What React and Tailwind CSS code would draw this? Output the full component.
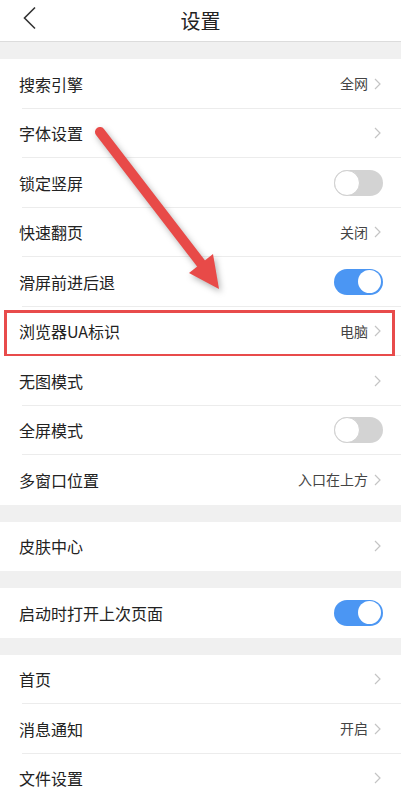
import React from "react";

const FONT = { fontFamily: '"Noto Sans CJK SC", "Noto Sans", sans-serif' };

function Chevron() {
  return (
    <svg width="7" height="12" viewBox="0 0 7 12" className="shrink-0">
      <path d="M1 1 L6 6 L1 11" fill="none" stroke="#c4c4c4" strokeWidth="1.2" />
    </svg>
  );
}

function Toggle({ on }) {
  return on ? (
    <div className="w-[49px] h-[26px] mr-[-2px] rounded-full bg-[#4b96f3] flex items-center justify-end pr-[2px]">
      <div className="w-[23px] h-[23px] rounded-full bg-white" />
    </div>
  ) : (
    <div className="w-[49px] h-[26px] mr-[-2px] rounded-full bg-[#d3d3d3] flex items-center">
      <div className="w-[26px] h-[26px] rounded-full bg-white border border-[#d0d0d0]" />
    </div>
  );
}

function Row({ label, value, toggle, divider = true, chevron = true, children }) {
  return (
    <div className="relative h-[49.5px] bg-white">
      <div className="flex items-center h-full pl-[19px] pr-[20px]">
        <span className="text-[16px] text-[#222] flex-1">{label}</span>
        {toggle !== undefined ? (
          <Toggle on={toggle} />
        ) : (
          <div className="flex items-center gap-[6px]">
            {value && <span className="text-[14px] text-[#444]">{value}</span>}
            {chevron && <Chevron />}
          </div>
        )}
      </div>
      {divider && <div className="absolute left-[22px] right-0 bottom-0 h-px bg-[#ececec]" />}
      {children}
    </div>
  );
}

function Band() {
  return <div className="h-[17px] bg-[#f0f0f0]" />;
}

export default function App() {
  return (
    <div className="relative w-[401px] h-[803px] overflow-hidden bg-white" style={FONT}>
      <div className="relative h-[42px] flex items-center justify-center border-b border-[#dcdcdc] bg-white">
        <svg className="absolute left-[22px] top-[6px]" width="16" height="24" viewBox="0 0 16 24">
          <path d="M13 1.5 L2.5 12 L13 22.5" fill="none" stroke="#333" strokeWidth="1.6" />
        </svg>
        <span className="text-[20px] text-[#222]">设置</span>
      </div>
      <Band />
      <Row label="搜索引擎" value="全网" />
      <Row label="字体设置" />
      <Row label="锁定竖屏" toggle={false} />
      <Row label="快速翻页" value="关闭" />
      <Row label="滑屏前进后退" toggle={true} />
      <Row label="浏览器UA标识" value="电脑">
        <div className="absolute left-[4px] right-[6px] top-[3.5px] bottom-[-1px] border-[3px] border-[#e84b4b]" />
      </Row>
      <Row label="无图模式" />
      <Row label="全屏模式" toggle={false} />
      <Row label="多窗口位置" value="入口在上方" divider={false} />
      <Band />
      <Row label="皮肤中心" divider={false} />
      <Band />
      <Row label="启动时打开上次页面" toggle={true} divider={false} />
      <Band />
      <Row label="首页" />
      <Row label="消息通知" value="开启" />
      <Row label="文件设置" divider={false} />

      <svg
        className="absolute left-0 top-0 pointer-events-none"
        width="401"
        height="803"
        viewBox="0 0 401 803"
        style={{ filter: "drop-shadow(2px 3px 3px rgba(0,0,0,0.3))" }}
      >
        <line x1="100" y1="132" x2="203" y2="266" stroke="#e84a48" strokeWidth="10" strokeLinecap="round" />
        <polygon points="189,273 219,289 213,254" fill="#e84a48" />
      </svg>
    </div>
  );
}
